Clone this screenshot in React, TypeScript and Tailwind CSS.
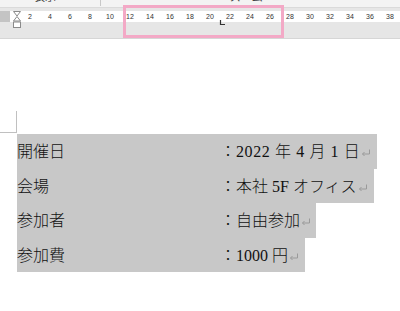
import React from 'react';

const rulerNums = [2, 4, 6, 8, 10, 12, 14, 16, 18, 20, 22, 24, 26, 28, 30, 32, 34, 36, 38];

const rows = [
  { label: '開催日', value: '2022 年 4 月 1 日', pad: 'pr-[6px]', gap: 'tracking-[0.6px]' },
  { label: '会場', value: '本社 5F オフィス', pad: 'pr-[6px]', gap: '' },
  { label: '参加者', value: '自由参加', pad: 'pr-[5px]', gap: '' },
  { label: '参加費', value: '1000 円', pad: 'pr-[6px]', gap: '' },
];

// Word の段落記号
function ReturnMark() {
  return (
    <svg width="10" height="10" viewBox="0 0 10 10" className="ml-[1px] mt-[2px]">
      <path d="M8.5 1.5 V6 H1.5 M3.5 4 L1.5 6 L3.5 8" fill="none" stroke="#9a9a9a" strokeWidth="1" />
    </svg>
  );
}

export default function App() {
  return (
    <div className="relative w-[400px] h-[311px] overflow-hidden bg-white" style={{ fontFamily: '"Liberation Serif", "Noto Sans CJK JP", serif' }}>
      {/* リボン下端 */}
      <div className="h-[8px] bg-[#f3f3f3] border-b border-[#dadada] relative overflow-hidden text-[11px] text-[#444]" style={{ fontFamily: '"Noto Sans CJK JP", sans-serif' }}>
        <span className="absolute left-[34px] top-[-9px] leading-none">表示</span>
        <span className="absolute left-[100px] top-0 w-px h-[6px] bg-[#c8c8c8]" />
        <span className="absolute left-[230px] top-[-9px] leading-none">ズーム</span>
      </div>
      <div className="h-[3px] bg-[#e6e6e6]" />

      {/* ルーラー */}
      <div className="relative flex h-[11px]">
        <div className="w-[17px] bg-[#c4c4c4]" />
        <div className="flex-1 bg-white flex pl-[10px]" style={{ fontFamily: '"Liberation Sans", sans-serif' }}>
          {rulerNums.map(n => (
            <div key={n} className="w-[20px] shrink-0 text-center text-[7px] leading-[11px] text-[#333]">
              {n}
            </div>
          ))}
        </div>
        {/* インデントマーカー */}
        <svg className="absolute left-[12px] top-0" width="10" height="18" viewBox="0 0 10 18">
          <path d="M1.5 0.5 H8.5 L5 5 Z" fill="#fff" stroke="#8a8a8a" />
          <path d="M5 5.5 L8.5 10 H1.5 Z" fill="#fff" stroke="#8a8a8a" />
          <rect x="1.5" y="11" width="7" height="5.5" fill="#fff" stroke="#8a8a8a" />
        </svg>
        {/* タブマーカー */}
        <svg className="absolute left-[219px] top-[9px]" width="7" height="6" viewBox="0 0 7 6">
          <path d="M1.5 0 V4.5 H6" fill="none" stroke="#333" strokeWidth="1.2" />
        </svg>
      </div>
      <div className="h-[17px] bg-[#e6e6e6] border-b border-[#d6d6d6]" />

      {/* 本文 */}
      <div className="relative pt-[95px]">
        <div className="absolute left-0 top-[93px] w-[17px] h-px bg-[#c0c0c0]" />
        <div className="absolute left-[16px] top-[72px] w-px h-[21px] bg-[#c0c0c0]" />
        <div className="pl-[17px] flex flex-col items-start text-[16px] text-[#111] font-light">
          {rows.map(r => (
            <div key={r.label} className={`flex items-center h-[34.5px] pt-[2px] bg-[#c8c8c8] ${r.pad}`}>
              <span className="w-[203px]">{r.label}</span>
              <span className="w-[16px] text-center">：</span>
              <span className={r.gap}>{r.value}</span>
              <ReturnMark />
            </div>
          ))}
        </div>
      </div>

      {/* ハイライト枠 */}
      <div className="absolute left-[123px] top-[5px] w-[161px] h-[33px] border-[3px] border-[#f3a9c6]" />
    </div>
  );
}
